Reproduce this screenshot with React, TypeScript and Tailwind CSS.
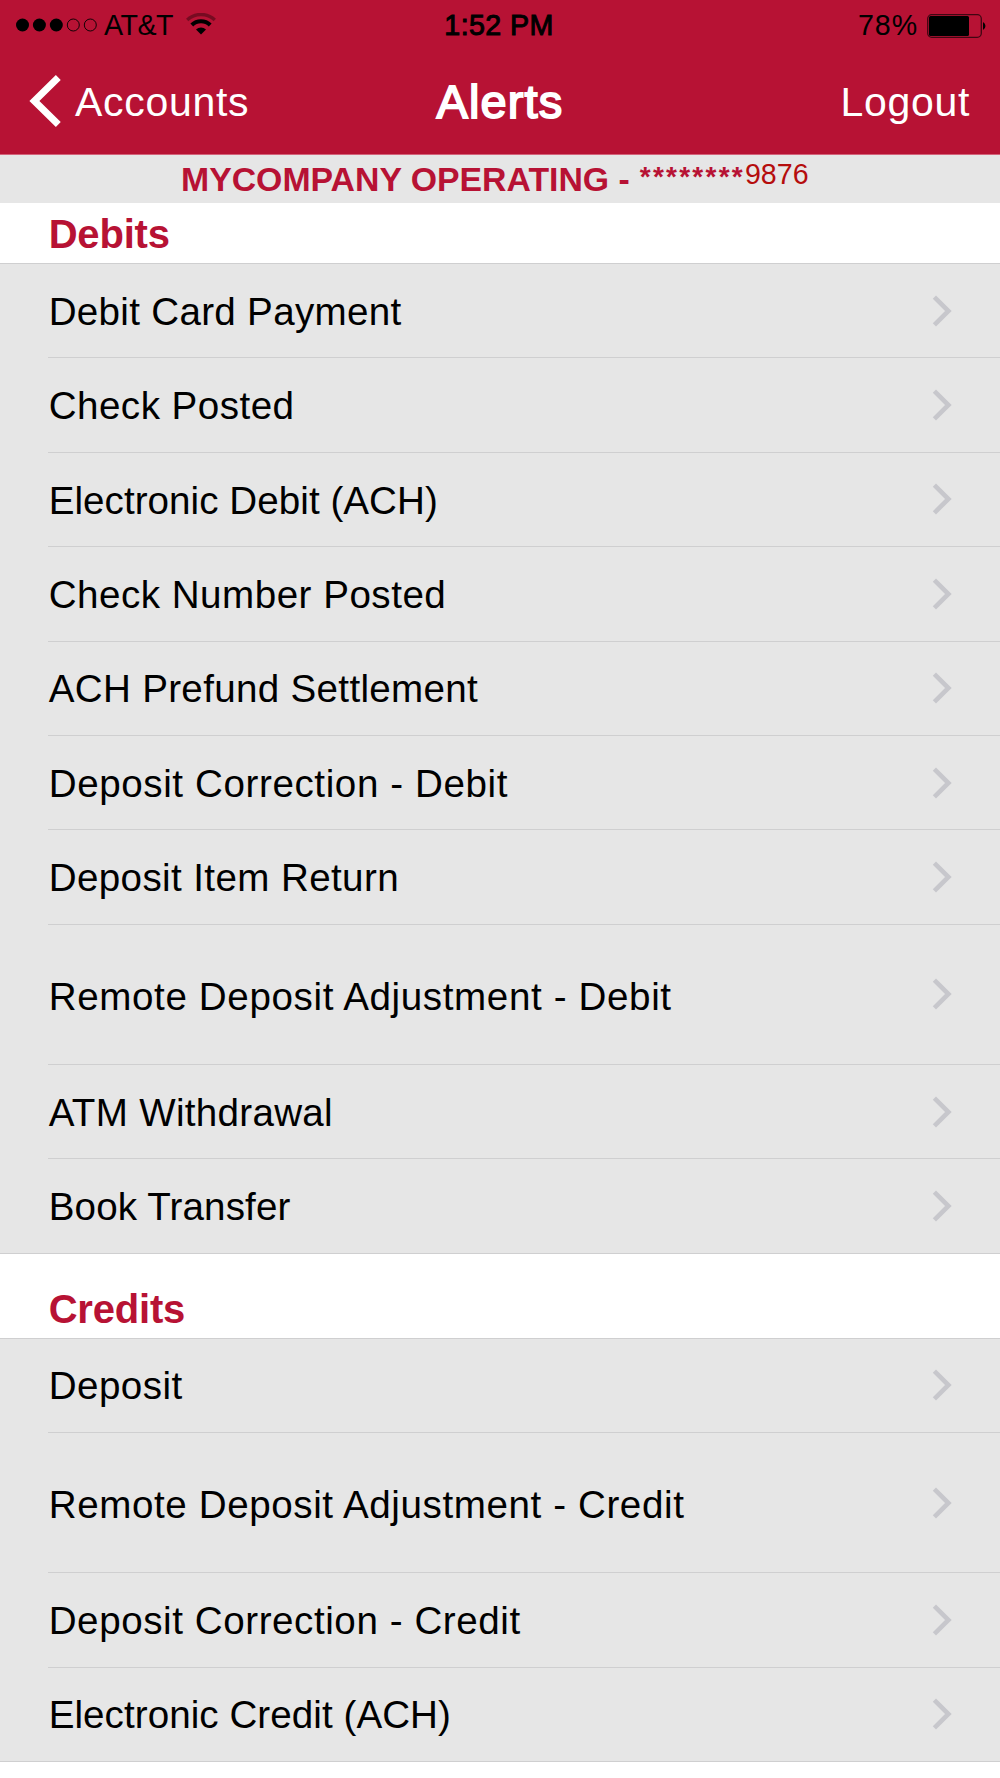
const DEBITS = [
  { label: 'Debit Card Payment', tracking: 'tracking-[0.3px]' },
  { label: 'Check Posted', tracking: 'tracking-[0.47px]' },
  { label: 'Electronic Debit (ACH)', tracking: 'tracking-[0.05px]' },
  { label: 'Check Number Posted', tracking: 'tracking-[0.5px]' },
  { label: 'ACH Prefund Settlement', tracking: 'tracking-[0.32px]' },
  { label: 'Deposit Correction - Debit', tracking: 'tracking-[0.6px]' },
  { label: 'Deposit Item Return', tracking: 'tracking-[0.38px]' },
  { label: 'Remote Deposit Adjustment - Debit', tracking: 'tracking-[0.62px]', tall: true },
  { label: 'ATM Withdrawal', tracking: 'tracking-[0.3px]' },
  { label: 'Book Transfer', tracking: 'tracking-[0.13px]' },
]

const CREDITS = [
  { label: 'Deposit', tracking: 'tracking-[0.45px]' },
  { label: 'Remote Deposit Adjustment - Credit', tracking: 'tracking-[0.6px]', tall: true },
  { label: 'Deposit Correction - Credit', tracking: 'tracking-[0.57px]' },
  { label: 'Electronic Credit (ACH)', tracking: 'tracking-[0.06px]' },
]

interface AlertItem {
  label: string
  tracking: string
  tall?: boolean
}

export default function App() {
  return (
    <div className="flex h-[1778px] w-[1000px] flex-col overflow-hidden bg-white font-['Liberation_Sans',Arial,sans-serif] whitespace-nowrap">
      <header className="h-[155px] shrink-0 border-b border-[#d4627a] bg-[#b71234]">
        <StatusBar />
        <NavBar />
      </header>

      <div className="flex h-12 shrink-0 items-center bg-[#e6e6e6] pl-[181px] text-[33.8px] font-bold text-[#b71234]">
        <span>MYCOMPANY OPERATING -</span>
        <span className="mb-1 ml-[10px] text-[28px] tracking-[2.25px]">********</span>
        <span className="mb-[9px] text-[28.6px] font-normal text-[#b50d0d]">9876</span>
      </div>

      <Section title="Debits" items={DEBITS} headerClass="h-[61px]" />
      <Section title="Credits" items={CREDITS} headerClass="h-[85px]" />
    </div>
  )
}

function StatusBar() {
  return (
    <div className="grid h-12 grid-cols-3 items-center pt-[3px] text-[28.6px] leading-none text-black">
      <div className="flex items-center pl-4">
        <SignalDots />
        <span className="ml-[6px] tracking-[-0.5px]">AT&amp;T</span>
        <WifiIcon />
      </div>
      <span className="pr-[2px] text-center tracking-[0.4px] [-webkit-text-stroke:1px_black]">1:52 PM</span>
      <div className="flex items-center justify-end pr-[13px]">
        <span className="mr-[9px] tracking-[0.9px]">78%</span>
        <BatteryIcon />
      </div>
    </div>
  )
}

function NavBar() {
  return (
    <div className="grid h-[106px] grid-cols-3 items-center text-[41px] leading-none text-white">
      <button className="flex items-center pl-[29px]">
        <svg width="33" height="52" viewBox="0 0 33 52" fill="none">
          <path d="M29.3 2.6 L5.4 26 L29.3 49.4" stroke="white" strokeWidth="7" />
        </svg>
        <span className="ml-[13px] pt-[2px] tracking-[0.7px]">Accounts</span>
      </button>
      <h1 className="text-center text-[47px] tracking-[1.1px] [-webkit-text-stroke:1.8px_white]">Alerts</h1>
      <button className="pt-[2px] pr-[30px] text-right tracking-[0.7px]">Logout</button>
    </div>
  )
}

function Section({ title, items, headerClass }: { title: string; items: AlertItem[]; headerClass: string }) {
  return (
    <section className="shrink-0">
      <div className={`flex items-end border-b border-[#cfcfd0] bg-white pl-[48.7px] ${headerClass}`}>
        <h2 className="text-[40px] leading-[58px] font-bold tracking-[-0.2px] text-[#b71234]">{title}</h2>
      </div>
      <ul className="bg-[#e6e6e6]">
        {items.map((item, i) => (
          <Row key={item.label} item={item} last={i === items.length - 1} />
        ))}
      </ul>
    </section>
  )
}

function Row({ item, last }: { item: AlertItem; last: boolean }) {
  return (
    <li
      className={`flex ${item.tall ? 'h-[140.2px]' : 'h-[94.4px]'} ${last ? 'border-b border-[#cfcfd0] pl-12' : 'ml-12'}`}
    >
      <div
        className={`flex flex-1 items-center justify-between pr-12 pl-[0.7px] ${last ? '' : 'border-b border-[#cfcfd0]'}`}
      >
        <span className={`text-[38.6px] text-black ${item.tracking} ${item.tall ? 'pt-[5px]' : 'pt-[2px]'}`}>
          {item.label}
        </span>
        <svg width="20" height="32" viewBox="0 0 20 32" fill="none">
          <path d="M2.4 2.2 L16.4 16 L2.4 29.8" stroke="#c7c7cc" strokeWidth="4.6" />
        </svg>
      </div>
    </li>
  )
}

function SignalDots() {
  return (
    <svg width="82" height="14" viewBox="0 0 82 14" className="relative -top-px">
      {[6.5, 23.4, 40.3].map((cx) => (
        <circle key={cx} cx={cx} cy="7" r="6.5" />
      ))}
      {[57.3, 74.3].map((cx) => (
        <circle key={cx} cx={cx} cy="7" r="6" fill="none" stroke="black" strokeWidth="0.9" />
      ))}
    </svg>
  )
}

function WifiIcon() {
  return (
    <svg width="30" height="22" viewBox="0 0 30 22" fill="none" className="relative -top-[2px] ml-[13px]">
      <path d="M1.2 7 A20 20 0 0 1 28.8 7" stroke="black" strokeOpacity="0.35" strokeWidth="3.4" />
      <path d="M5.8 12 A13 13 0 0 1 24.2 12" stroke="black" strokeWidth="4" />
      <path d="M15 21.4 L10 16.4 A7.2 7.2 0 0 1 20 16.4 Z" fill="black" />
    </svg>
  )
}

function BatteryIcon() {
  return (
    <svg width="60" height="24" viewBox="0 0 60 24" fill="none">
      <rect x="0.7" y="0.7" width="53.6" height="22.6" rx="4" stroke="black" strokeOpacity="0.65" strokeWidth="1.3" />
      <rect x="2" y="2" width="40" height="20" rx="1.5" fill="black" />
      <path d="M56 8 A4.5 4.5 0 0 1 56 16 Z" fill="black" />
    </svg>
  )
}
